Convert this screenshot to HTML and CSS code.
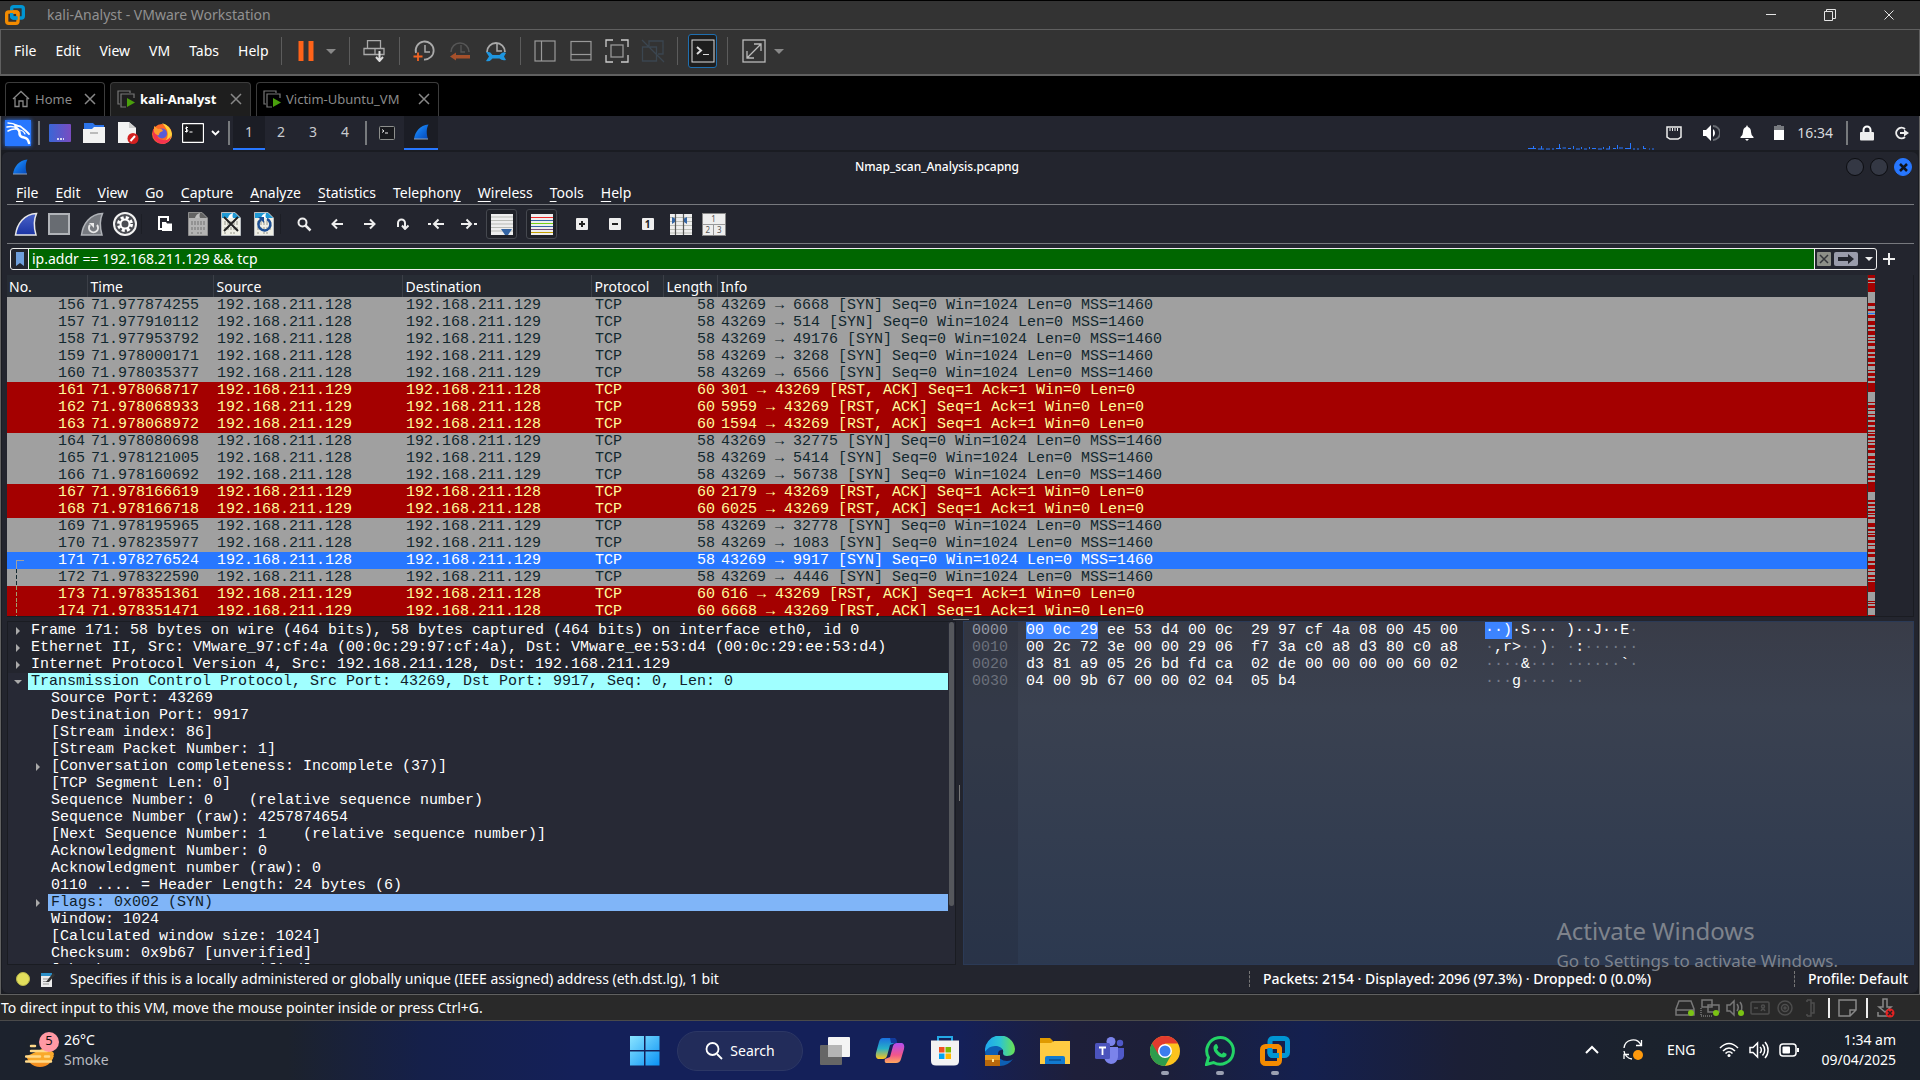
FILE: index.html
```html
<!DOCTYPE html>
<html lang="en">
<head>
<meta charset="utf-8">
<title>kali-Analyst - VMware Workstation</title>
<link rel="stylesheet" href="styles.css">
</head>
<body>
<svg class="defs" aria-hidden="true">
  <defs>
    <linearGradient id="g-fin" x1="0" y1="0" x2="1" y2="1"><stop offset="0" stop-color="#2fa0ff"/><stop offset=".5" stop-color="#0f6ee0"/><stop offset="1" stop-color="#0646b4"/></linearGradient>
    <linearGradient id="g-royal" x1="0" y1="0" x2="0" y2="1"><stop offset="0" stop-color="#4a63c8"/><stop offset="1" stop-color="#1b34a4"/></linearGradient>
    <symbol id="fin" viewBox="0 0 16 16"><path d="M1 15C2 8 7 1 15.500 .5C13 5 13.500 10 15 15Z" fill="url(#g-fin)"/><path d="M1 15H15" stroke="#8fa0b8" stroke-width="1"/></symbol>
    <symbol id="vmlogo" viewBox="0 0 30 30"><rect x="10" y="2.500" width="17.500" height="17" rx="3" fill="none" stroke="#0095d3" stroke-width="5"/><rect x="2.500" y="10.500" width="17" height="17" rx="3" fill="none" stroke="#f38b00" stroke-width="5"/><path d="M10 12V17A3 3 0 0 0 13 19.500H19" fill="none" stroke="#0095d3" stroke-width="5"/><path d="M12 10.500H17A2.500 2.500 0 0 1 19.500 13V16" fill="none" stroke="#f38b00" stroke-width="5"/></symbol>
    <symbol id="x" viewBox="0 0 12 12"><path d="M1 1L11 11M11 1L1 11" fill="none" stroke="currentColor" stroke-width="1.500"/></symbol>
    <symbol id="vmtab" viewBox="0 0 18 18"><path d="M3 14H1V1H13V3" fill="none" stroke="#777" stroke-width="1.200"/><path d="M17 8V4H4V17H9" fill="none" stroke="#777" stroke-width="1.200"/><path d="M10 8V17L18 12.500Z" fill="#4aa00c"/></symbol>
    <symbol id="page" viewBox="0 0 20 24"><path d="M.500 .5H14L19.500 6V23.500H.500Z" fill="#f0f0e6" stroke="#b8bcc0"/><path d="M1 1H14L19 6V6H1Z" fill="#1f9ad6"/><path d="M7 6Q8 2 12 1Q11 4 12 6Z" fill="#fff"/><path d="M4 9V13M7 9V13M10 9V13M13 9V13M16 9V13M4 15V18M7 15V18M10 15V18M13 15V18M16 15V18M4 20V22M10 20V22M13 20V22" stroke="#b5b5aa" stroke-width="1.500"/></symbol>
  </defs>
</svg>

<div class="app">
  <header class="titlebar">
    <svg class="titlebar-logo"><use href="#vmlogo"/></svg>
    <h1>kali-Analyst - VMware Workstation</h1>
    <div class="win-controls">
      <button aria-label="Minimize"><svg width="10" height="12" viewBox="0 0 10 12"><path d="M0 5.500H10" stroke="#e4e4e4"/></svg></button>
      <button aria-label="Restore"><svg width="12" height="12" viewBox="0 0 12 12" fill="none" stroke="#e4e4e4"><path d="M.500 2.500H8.500V11.500H.500Z"/><path d="M2.500 2.500V.500H11.500V9.500H9"/></svg></button>
      <button aria-label="Close"><svg width="10" height="10" viewBox="0 0 10 10"><path d="M.500 .5L9.500 9.500M9.500 .5L.500 9.500" stroke="#e4e4e4"/></svg></button>
    </div>
  </header>

  <div class="vm-toolbar">
    <nav class="vm-menu">
      <button>File</button><button>Edit</button><button>View</button><button>VM</button><button>Tabs</button><button>Help</button>
    </nav>
    <div class="tool-group power">
      <button aria-label="Pause"><svg width="16" height="20" viewBox="0 0 16 20"><path d="M3 0V20M13 0V20" stroke="#ff6319" stroke-width="5"/></svg></button>
      <button class="caret" aria-label="Power options"></button>
    </div>
    <div class="tool-group single">
      <button aria-label="Send Ctrl+Alt+Del"><svg width="22" height="22" viewBox="0 0 22 22" fill="none" stroke="#aaa" stroke-width="1.300"><path d="M4.500 8V.700H17.500V8M1 8.500H12V14.500H1ZM12 8.500H21V14.500H12"/><path d="M16.500 11V20M13 17L16.500 21L20 17" stroke="#ddd" stroke-width="2"/></svg></button>
    </div>
    <div class="tool-group">
      <button aria-label="Take snapshot"><svg width="22" height="22" viewBox="0 0 22 22" fill="none"><path d="M3 13A9 9 0 1 1 11 19.500" stroke="#aaa" stroke-width="1.800"/><path d="M12 5V12H17" stroke="#aaa" stroke-width="1.500"/><path d="M5 12.500V21M.500 16.500H9.500" stroke="#f26322" stroke-width="1.800"/></svg></button>
      <button aria-label="Revert snapshot"><svg width="22" height="22" viewBox="0 0 22 22" fill="none"><path d="M2 12A9 9 0 1 1 20 12" stroke="#565656" stroke-width="1.500"/><path d="M12 5V12H16" stroke="#565656" stroke-width="1.300"/><path d="M1 16.500L7 12.500V15H21V18.500H7V20.500Z" fill="#a5502b"/></svg></button>
      <button aria-label="Manage snapshots"><svg width="22" height="22" viewBox="0 0 22 22" fill="none"><path d="M2 12A9 9 0 1 1 20 12" stroke="#aaa" stroke-width="1.800"/><path d="M12 4V11H17" stroke="#aaa" stroke-width="1.500"/><path d="M1 12Q5 11 7.500 15H14.500Q18 11 21 13L19 16.500L21 20Q17 21 14.500 18.500H7.500Q5 22 1 21L4 16.500Z" fill="#1e96e0"/></svg></button>
    </div>
    <div class="tool-group">
      <button aria-label="Show library"><svg width="22" height="22" viewBox="0 0 22 22" fill="none" stroke="#999" stroke-width="1.200"><rect x="1" y="1" width="20" height="20"/><path d="M7.500 1V21"/></svg></button>
      <button aria-label="Show thumbnail bar"><svg width="22" height="22" viewBox="0 0 22 22" fill="none" stroke="#999" stroke-width="1.200"><rect x="1" y="1.500" width="20" height="18.500"/><path d="M1 14.500H21"/></svg></button>
      <button aria-label="Full screen"><svg width="24" height="24" viewBox="0 0 24 24" fill="none" stroke="#ccc" stroke-width="1.300"><path d="M1 8V1H8M16 1H23V8M23 16V23H16M8 23H1V16"/><rect x="6" y="6" width="12" height="12" stroke="#999"/></svg></button>
      <button aria-label="Unity"><svg width="24" height="24" viewBox="0 0 24 24" fill="none" stroke="#3b4650" stroke-width="1.300"><path d="M8 7V2H22V15H17M1.500 8H15.500V22H1.500ZM1 1L23 23"/></svg></button>
    </div>
    <div class="tool-group console">
      <button class="active" aria-label="Console view"><svg width="24" height="24" viewBox="0 0 24 24" fill="none" stroke="#ddd"><rect x="1" y="1" width="22" height="22"/><path d="M6 8L10 11.500L6 15" stroke-width="2"/><path d="M12 15.500H18"/></svg></button>
    </div>
    <div class="tool-group stretch">
      <button aria-label="Stretch guest"><svg width="24" height="24" viewBox="0 0 24 24" fill="none" stroke="#bbb" stroke-width="1.300"><rect x="1" y="1" width="22" height="22"/><path d="M5 19L19 5M12 5H19V12M5 12V19H12"/></svg></button>
      <button class="caret" aria-label="Stretch options"></button>
    </div>
  </div>

  <nav class="vm-tabs">
    <div class="vm-tab"><button><svg width="18" height="18" viewBox="0 0 18 18" fill="none" stroke="#888" stroke-width="1.300"><path d="M1 9L9 1.500L17 9M3 8V16.500H7V11H11V16.500H15V8"/></svg>Home</button><button aria-label="Close Home"><svg width="12" height="12"><use href="#x"/></svg></button></div>
    <div class="vm-tab current"><button><svg width="18" height="18"><use href="#vmtab"/></svg>kali-Analyst</button><button aria-label="Close kali-Analyst"><svg width="12" height="12"><use href="#x"/></svg></button></div>
    <div class="vm-tab wide"><button><svg width="18" height="18"><use href="#vmtab"/></svg>Victim-Ubuntu_VM</button><button aria-label="Close Victim-Ubuntu_VM"><svg width="12" height="12"><use href="#x"/></svg></button></div>
  </nav>

  <main class="guest">
    <div class="panel">
      <div class="launchers">
        <button class="kali" aria-label="Applications"><svg width="26" height="26" viewBox="0 0 26 26" fill="none" stroke="#fff" stroke-linecap="round"><path d="M3 3Q8 3 12 5.500M2 7Q7 5.500 12 8M3 11Q7 8.500 11 9" stroke-width="1.500"/><path d="M10 6Q15 5 18 8.500L21 11L24 14" stroke-width="1.800"/><path d="M11 8Q15 10 14.500 14Q15 17 19 17.500Q23 18 24 23" stroke-width="2.500"/><path d="M15 10Q19 11 20 14" stroke-width="1.200"/></svg></button>
        <span class="bar"></span>
        <button aria-label="Desktop"><svg width="22" height="18" viewBox="0 0 22 18"><defs><linearGradient id="g-desk"><stop stop-color="#3a66d6"/><stop offset="1" stop-color="#7a4cc0"/></linearGradient></defs><rect width="22" height="18" rx="1" fill="url(#g-desk)"/><path d="M8 15H10M11 15H13M14 15H15" stroke="#fff" stroke-width="1.500"/></svg></button>
        <button aria-label="Files"><svg width="24" height="22" viewBox="0 0 24 22"><path d="M2 1H11L13 3H22V8H2Z" fill="#2c74ea"/><path d="M1 7H10L12 5H23V21H1Z" fill="#f2f2f2"/><path d="M8 11H16" stroke="#bbb" stroke-width="2"/></svg></button>
        <button aria-label="Text editor"><svg width="22" height="24" viewBox="0 0 22 24"><path d="M1 1H12L19 7V22H1Z" fill="#f3f3f3"/><path d="M12 1V7H19Z" fill="#cfcfcf"/><circle cx="16" cy="17.500" r="5.500" fill="#d32020"/><path d="M13.500 20L18 15" stroke="#fff" stroke-width="2"/></svg></button>
        <button aria-label="Firefox"><svg width="24" height="24" viewBox="0 0 24 24"><circle cx="12" cy="13" r="10" fill="#ff6a26"/><path d="M12 2Q21 5 22 13A10 10 0 0 1 12 23Q20 18 17 9Q15 5 12 2Z" fill="#ffd23a"/><path d="M3 13A10 10 0 0 0 12 23Q20 23 21 15Q18 20 13 19Q6 18 7 11L3 8Z" fill="#f5334f"/><circle cx="12" cy="12.500" r="5" fill="#5a5cd8"/><path d="M4 5L8 8Q12 7 13 10Q9 11 9 14Q6 15 4 11Z" fill="#ff9a2e"/></svg></button>
        <button class="term" aria-label="Terminal"><svg width="22" height="20" viewBox="0 0 22 20" fill="none" stroke="#fff"><rect x=".5" y=".5" width="21" height="19" rx="1" fill="#18191d" stroke-width="1.300"/><path d="M6 4.500H4Q3 6 5 6.500Q6.500 7 5.500 8.500H3M4.500 3.500V9.500M7.500 9H10.500"/></svg></button>
        <button class="chev" aria-label="More terminals"><svg width="9" height="6" viewBox="0 0 9 6"><path d="M1 1L4.500 4.500L8 1" fill="none" stroke="#fff" stroke-width="1.800"/></svg></button>
        <span class="bar"></span>
      </div>
      <div class="workspaces"><button class="on">1</button><button>2</button><button>3</button><button>4</button></div>
      <div class="tasks">
        <span class="bar"></span>
        <button aria-label="Terminal window"><svg width="16" height="14" viewBox="0 0 16 14"><rect x=".5" y=".5" width="15" height="13" rx="1" fill="#18191d" stroke="#8d8f8d"/><path d="M3 3.500L5 5L3 6.500M6 7H9" fill="none" stroke="#eee"/></svg></button>
        <button class="on" aria-label="Wireshark window"><svg width="16" height="16"><use href="#fin"/></svg></button>
      </div>
      <svg class="cpu" width="126" height="7" viewBox="0 0 126 7" fill="none" stroke="#2777ff"><path d="M0 5.500H8M5.500 3V6M10 6H16M13.500 3V6M18 6H22M24 6H26M28 5.500H33M31.500 1V6M34.500 5H38M40 5.500H43M45.500 3V6M48 6H52M53.500 4V6M56 6H59M61.500 4V6M64 5.500H68M70 6H74M75.500 4V6M78 6H82M81.500 3V6M85 5.500H88M89.500 2V6M91 5H95M97 5.500H103M102.500 0V6M105 6H107M109 6H111M115.500 3V6M116 5.500H118M121 6H122M124 6H126"/></svg>
      <div class="tray">
        <svg width="16" height="14" viewBox="0 0 16 14" fill="none" stroke="#eee" stroke-width="1.500"><path d="M1 1H15V11L12 13H4L1 11Z"/><path d="M4 2V5M6.500 2V5M9 2V5M11.500 2V5" stroke-width="1"/></svg>
        <svg width="18" height="18" viewBox="0 0 18 18"><path d="M1 6H4L9 1V17L4 12H1Z" fill="#fff"/><path d="M11 5A5 5 0 0 1 11 13Z" fill="#fff"/><path d="M11 2A7 7 0 0 1 11 16" fill="none" stroke="#666a70" stroke-width="1.800"/></svg>
        <svg width="14" height="16" viewBox="0 0 14 16"><path d="M7 0L8 2Q11 3 11 7Q11 10 13.500 12V13H.500V12Q3 10 3 7Q3 3 6 2ZM5 14H9L7 16Z" fill="#fff"/></svg>
        <svg width="10" height="16" viewBox="0 0 10 16"><path d="M0 1H3V0H7V1H10V6H0Z" fill="#777a7f"/><path d="M0 5H10V15H0Z" fill="#fff"/></svg>
        <time class="clock">16:34</time>
        <span class="bar"></span>
        <svg width="14" height="16" viewBox="0 0 14 16"><path d="M3.500 8V5A3.500 3.500 0 0 1 10.500 5V8" fill="none" stroke="#fff" stroke-width="2"/><rect x="0" y="7" width="14" height="8.500" rx="1" fill="#eee"/></svg>
        <svg width="16" height="14" viewBox="0 0 16 14" fill="none" stroke="#eee" stroke-width="2"><path d="M11 3A5.300 5.300 0 1 0 11 11"/><path d="M6 7H11"/><path d="M10 3.500L15 7L10 10.500Z" fill="#eee" stroke="none"/></svg>
      </div>
    </div>

    <section class="shark">
      <header class="shark-title">
        <svg width="16" height="16"><use href="#fin"/></svg>
        <h2>Nmap_scan_Analysis.pcapng</h2>
        <button aria-label="Minimize"></button><button aria-label="Maximize"></button><button class="close" aria-label="Close"><svg width="9" height="9" viewBox="0 0 9 9"><path d="M1 1L8 8M8 1L1 8" stroke="#10131c" stroke-width="2.500"/></svg></button>
      </header>
      <nav class="shark-menu">
        <button><u>F</u>ile</button><button><u>E</u>dit</button><button><u>V</u>iew</button><button><u>G</u>o</button><button><u>C</u>apture</button><button><u>A</u>nalyze</button><button><u>S</u>tatistics</button><button>Telephon<u>y</u></button><button><u>W</u>ireless</button><button><u>T</u>ools</button><button><u>H</u>elp</button>
      </nav>
      <div class="shark-tools">
        <button aria-label="Start capture"><svg width="24" height="24" viewBox="0 0 24 24"><path d="M1.500 23C3 12 10 2 22.500 1.500C19 9 20 16 22 23Z" fill="url(#g-royal)" stroke="#e8e8e8" stroke-width="1.500"/></svg></button>
        <button aria-label="Stop capture"><svg width="22" height="22" viewBox="0 0 22 22"><rect x="1" y="1" width="20" height="20" fill="#686c72" stroke="#b0b3b8" stroke-width="2"/></svg></button>
        <button aria-label="Restart capture"><svg width="24" height="24" viewBox="0 0 24 24"><path d="M1.500 23C3 12 10 2 22.500 1.500C19 9 20 16 22 23Z" fill="#777a80" stroke="#b0b3b8" stroke-width="1.500"/><path d="M10 13A4.500 4.500 0 1 0 17 13" fill="none" stroke="#e8e8e8" stroke-width="2"/><path d="M9 11H14V16Z" fill="#e8e8e8"/></svg></button>
        <button aria-label="Capture options"><svg width="24" height="24" viewBox="0 0 24 24" fill="none"><circle cx="12" cy="12" r="11" fill="#4a4c52" stroke="#f2f2f2" stroke-width="2"/><circle cx="12" cy="12" r="6.500" stroke="#fff" stroke-width="3" stroke-dasharray="3 2.100"/><circle cx="12" cy="12" r="4.500" stroke="#fff" stroke-width="2"/></svg></button>
        <i></i>
        <button aria-label="Open file"><svg width="16" height="16" viewBox="0 0 16 16"><path d="M6 13H2V1H11V5" fill="none" stroke="#fff" stroke-width="2"/><path d="M5 6H9L10 7.500H15V15H5Z" fill="#fff"/></svg></button>
        <button aria-label="Save file"><svg class="dim" width="20" height="24"><use href="#page"/></svg></button>
        <button aria-label="Close file"><svg width="20" height="24" viewBox="0 0 20 24"><use href="#page" width="20" height="24"/><path d="M3 5L17 19M17 5L3 19" stroke="#222" stroke-width="2"/></svg></button>
        <button aria-label="Reload file"><svg width="20" height="24" viewBox="0 0 20 24"><use href="#page" width="20" height="24"/><path d="M13 7A6 6 0 1 1 7 7.500" fill="none" stroke="#1c4f94" stroke-width="2.500"/><path d="M4 5H10V11Z" fill="#1c4f94"/></svg></button>
        <i></i>
        <button aria-label="Find packet"><svg width="16" height="16" viewBox="0 0 16 16" fill="none" stroke="#eee"><circle cx="6.500" cy="6.500" r="4" stroke-width="2"/><path d="M9.500 9.500L14.500 14.500" stroke-width="2.500"/></svg></button>
        <button aria-label="Previous packet"><svg width="12" height="12" viewBox="0 0 12 12" fill="none" stroke="#eee" stroke-width="2"><path d="M12 6H1.500M6 1.500L1.500 6L6 10.500"/></svg></button>
        <button aria-label="Next packet"><svg width="12" height="12" viewBox="0 0 12 12" fill="none" stroke="#eee" stroke-width="2"><path d="M0 6H10.500M6 1.500L10.500 6L6 10.500"/></svg></button>
        <button aria-label="Go to packet"><svg width="12" height="12" viewBox="0 0 12 12" fill="none" stroke="#eee" stroke-width="2"><path d="M1 9V5A3.500 3.500 0 0 1 8 5V10M5 7.500L8 11L11.500 7.500"/></svg></button>
        <button aria-label="First packet"><svg width="16" height="12" viewBox="0 0 16 12" fill="none" stroke="#eee" stroke-width="2"><path d="M16 6H6M10.500 1.500L6 6L10.500 10.500M0 6H3"/></svg></button>
        <button aria-label="Last packet"><svg width="16" height="12" viewBox="0 0 16 12" fill="none" stroke="#eee" stroke-width="2"><path d="M0 6H10M5.500 1.500L10 6L5.500 10.500M13 6H16"/></svg></button>
        <button class="checked" aria-label="Auto scroll"><svg width="22" height="21" viewBox="0 0 22 21"><path d="M0 0H22V21H0Z" fill="#eee"/><path d="M0 3H22M0 6.500H22M0 10H22M0 13.500H22M0 17H22" stroke="#b9bbb6"/><path d="M10 15H21L17 21H14Z" fill="#3465a4"/></svg></button>
        <i></i>
        <button class="checked" aria-label="Colorize"><svg width="22" height="21" viewBox="0 0 22 21"><path d="M0 0H22V21H0Z" fill="#eee"/><path d="M0 3.500H22" stroke="#ef2929"/><path d="M0 6.500H22M0 12.500H22" stroke="#3465a4"/><path d="M0 9.500H22" stroke="#73d216"/><path d="M0 15.500H22" stroke="#75507b"/><path d="M0 18.500H22" stroke="#c4a000"/></svg></button>
        <i></i>
        <button aria-label="Zoom in"><svg width="12" height="12" viewBox="0 0 12 12"><rect width="12" height="12" rx="1" fill="#eee"/><path d="M3 6H9M6 3V9" stroke="#222" stroke-width="2"/></svg></button>
        <button aria-label="Zoom out"><svg width="12" height="12" viewBox="0 0 12 12"><rect width="12" height="12" rx="1" fill="#eee"/><path d="M3 6H9" stroke="#222" stroke-width="2"/></svg></button>
        <button aria-label="Normal size"><span class="one">1</span></button>
        <button aria-label="Resize columns"><svg width="22" height="21" viewBox="0 0 22 21"><path d="M0 0H22V21H0Z" fill="#eee"/><path d="M0 3.500H22M0 7.500H22M0 11.500H22M0 15.500H22M0 19H22" stroke="#babdb6"/><path d="M5.500 0V21M13.500 0V21" stroke="#555" stroke-width="1.200"/><path d="M2 3L5 4.500V8L2 10ZM17 3L14 4.500V8L17 10Z" fill="#3465a4"/></svg></button>
        <button aria-label="Layout"><span class="layout"><b>1</b><b>2</b><b>3</b></span></button>
      </div>

      <div class="filter">
        <div class="filter-box">
          <button class="bookmark" aria-label="Bookmark filter"><svg width="8" height="14" viewBox="0 0 8 14"><path d="M0 0H8V14L4 11L0 14Z" fill="#6f9fdc"/></svg></button>
          <input type="text" aria-label="Display filter" value="ip.addr == 192.168.211.129 &amp;&amp; tcp">
          <button class="clear" aria-label="Clear filter"><svg width="10" height="10" viewBox="0 0 10 10"><path d="M1 1L9 9M9 1L1 9" stroke="#33353a" stroke-width="1.500"/></svg></button>
          <button class="apply" aria-label="Apply filter"><svg width="16" height="10" viewBox="0 0 16 10"><path d="M0 3H10V0L16 5L10 10V7H0Z" fill="#23252e"/></svg></button>
          <button class="caret white" aria-label="Recent filters"></button>
        </div>
        <button class="add" aria-label="Add filter button"><svg width="12" height="12" viewBox="0 0 12 12"><path d="M6 0V12M0 6H12" stroke="#eee" stroke-width="2"/></svg></button>
      </div>

      <div class="packets">
        <div class="packet-scroll">
          <table>
            <colgroup><col class="c-no"><col class="c-time"><col class="c-addr"><col class="c-addr"><col class="c-proto"><col class="c-len"><col></colgroup>
            <thead><tr><th>No.</th><th>Time</th><th>Source</th><th>Destination</th><th>Protocol</th><th>Length</th><th>Info</th></tr></thead>
            <tbody>
              <tr><td>156</td><td>71.977874255</td><td>192.168.211.128</td><td>192.168.211.129</td><td>TCP</td><td>58</td><td>43269 → 6668 [SYN] Seq=0 Win=1024 Len=0 MSS=1460</td></tr>
              <tr><td>157</td><td>71.977910112</td><td>192.168.211.128</td><td>192.168.211.129</td><td>TCP</td><td>58</td><td>43269 → 514 [SYN] Seq=0 Win=1024 Len=0 MSS=1460</td></tr>
              <tr><td>158</td><td>71.977953792</td><td>192.168.211.128</td><td>192.168.211.129</td><td>TCP</td><td>58</td><td>43269 → 49176 [SYN] Seq=0 Win=1024 Len=0 MSS=1460</td></tr>
              <tr><td>159</td><td>71.978000171</td><td>192.168.211.128</td><td>192.168.211.129</td><td>TCP</td><td>58</td><td>43269 → 3268 [SYN] Seq=0 Win=1024 Len=0 MSS=1460</td></tr>
              <tr><td>160</td><td>71.978035377</td><td>192.168.211.128</td><td>192.168.211.129</td><td>TCP</td><td>58</td><td>43269 → 6566 [SYN] Seq=0 Win=1024 Len=0 MSS=1460</td></tr>
              <tr class="rst"><td>161</td><td>71.978068717</td><td>192.168.211.129</td><td>192.168.211.128</td><td>TCP</td><td>60</td><td>301 → 43269 [RST, ACK] Seq=1 Ack=1 Win=0 Len=0</td></tr>
              <tr class="rst"><td>162</td><td>71.978068933</td><td>192.168.211.129</td><td>192.168.211.128</td><td>TCP</td><td>60</td><td>5959 → 43269 [RST, ACK] Seq=1 Ack=1 Win=0 Len=0</td></tr>
              <tr class="rst"><td>163</td><td>71.978068972</td><td>192.168.211.129</td><td>192.168.211.128</td><td>TCP</td><td>60</td><td>1594 → 43269 [RST, ACK] Seq=1 Ack=1 Win=0 Len=0</td></tr>
              <tr><td>164</td><td>71.978080698</td><td>192.168.211.128</td><td>192.168.211.129</td><td>TCP</td><td>58</td><td>43269 → 32775 [SYN] Seq=0 Win=1024 Len=0 MSS=1460</td></tr>
              <tr><td>165</td><td>71.978121005</td><td>192.168.211.128</td><td>192.168.211.129</td><td>TCP</td><td>58</td><td>43269 → 5414 [SYN] Seq=0 Win=1024 Len=0 MSS=1460</td></tr>
              <tr><td>166</td><td>71.978160692</td><td>192.168.211.128</td><td>192.168.211.129</td><td>TCP</td><td>58</td><td>43269 → 56738 [SYN] Seq=0 Win=1024 Len=0 MSS=1460</td></tr>
              <tr class="rst"><td>167</td><td>71.978166619</td><td>192.168.211.129</td><td>192.168.211.128</td><td>TCP</td><td>60</td><td>2179 → 43269 [RST, ACK] Seq=1 Ack=1 Win=0 Len=0</td></tr>
              <tr class="rst"><td>168</td><td>71.978166718</td><td>192.168.211.129</td><td>192.168.211.128</td><td>TCP</td><td>60</td><td>6025 → 43269 [RST, ACK] Seq=1 Ack=1 Win=0 Len=0</td></tr>
              <tr><td>169</td><td>71.978195965</td><td>192.168.211.128</td><td>192.168.211.129</td><td>TCP</td><td>58</td><td>43269 → 32778 [SYN] Seq=0 Win=1024 Len=0 MSS=1460</td></tr>
              <tr><td>170</td><td>71.978235977</td><td>192.168.211.128</td><td>192.168.211.129</td><td>TCP</td><td>58</td><td>43269 → 1083 [SYN] Seq=0 Win=1024 Len=0 MSS=1460</td></tr>
              <tr class="selected"><td class="first">171</td><td>71.978276524</td><td>192.168.211.128</td><td>192.168.211.129</td><td>TCP</td><td>58</td><td>43269 → 9917 [SYN] Seq=0 Win=1024 Len=0 MSS=1460</td></tr>
              <tr><td class="related">172</td><td>71.978322590</td><td>192.168.211.128</td><td>192.168.211.129</td><td>TCP</td><td>58</td><td>43269 → 4446 [SYN] Seq=0 Win=1024 Len=0 MSS=1460</td></tr>
              <tr class="rst"><td class="related">173</td><td>71.978351361</td><td>192.168.211.129</td><td>192.168.211.128</td><td>TCP</td><td>60</td><td>616 → 43269 [RST, ACK] Seq=1 Ack=1 Win=0 Len=0</td></tr>
              <tr class="rst"><td class="related">174</td><td>71.978351471</td><td>192.168.211.129</td><td>192.168.211.128</td><td>TCP</td><td>60</td><td>6668 → 43269 [RST, ACK] Seq=1 Ack=1 Win=0 Len=0</td></tr>
            </tbody>
          </table>
        </div>
        <svg class="minimap" viewBox="0 15 21 1023" preserveAspectRatio="none"><path d="M0 15H21V1038H0Z" fill="#a40000"/><path fill="#a0a0a0" d="M0 24h21v6H0zM0 36h21v3H0zM0 66h21v33H0zM0 108h21v9H0zM0 123h21v12H0zM0 144h21v9H0zM0 165h21v6H0zM0 177h21v6H0zM0 195h21v6H0zM0 204h21v6H0zM0 213h21v6H0zM0 228h21v9H0zM0 246h21v6H0zM0 258h21v6H0zM0 276h21v6H0zM0 288h21v12H0zM0 303h21v6H0zM0 318h21v6H0zM0 333h21v6H0zM0 366h21v30H0zM0 399h21v6H0zM0 414h21v6H0zM0 423h21v9H0zM0 435h21v6H0zM0 450h21v6H0zM0 465h21v6H0zM0 480h21v6H0zM0 489h21v3H0zM0 498h21v6H0zM0 510h21v6H0zM0 519h21v6H0zM0 534h21v6H0zM0 549h21v9H0zM0 567h21v6H0zM0 579h21v6H0zM0 588h21v6H0zM0 600h21v9H0zM0 618h21v6H0zM0 630h21v6H0zM0 666h21v24H0zM0 696h21v6H0zM0 708h21v6H0zM0 717h21v6H0zM0 729h21v3H0zM0 735h21v6H0zM0 747h21v12H0zM0 771h21v6H0zM0 783h21v6H0zM0 792h21v3H0zM0 801h21v9H0zM0 819h21v6H0zM0 828h21v9H0zM0 846h21v6H0zM0 861h21v12H0zM0 879h21v6H0zM0 897h21v6H0zM0 906h21v9H0zM0 921h21v6H0zM0 933h21v3H0zM0 966h21v27H0zM0 996h21v3H0zM0 1002h21v6H0zM0 1014h21v21H0z"/><path d="M0 129h21v3H0z" fill="#2777ff"/></svg>
      </div>

      <div class="splitter"></div>

      <div class="lower">
        <div class="details">
          <ul class="tree">
            <li class="top closed"><span>Frame 171: 58 bytes on wire (464 bits), 58 bytes captured (464 bits) on interface eth0, id 0</span></li>
            <li class="top closed"><span>Ethernet II, Src: VMware_97:cf:4a (00:0c:29:97:cf:4a), Dst: VMware_ee:53:d4 (00:0c:29:ee:53:d4)</span></li>
            <li class="top closed"><span>Internet Protocol Version 4, Src: 192.168.211.128, Dst: 192.168.211.129</span></li>
            <li class="top open"><span class="related-proto">Transmission Control Protocol, Src Port: 43269, Dst Port: 9917, Seq: 0, Len: 0</span></li>
            <li><span>Source Port: 43269</span></li>
            <li><span>Destination Port: 9917</span></li>
            <li><span>[Stream index: 86]</span></li>
            <li><span>[Stream Packet Number: 1]</span></li>
            <li class="closed"><span>[Conversation completeness: Incomplete (37)]</span></li>
            <li><span>[TCP Segment Len: 0]</span></li>
            <li><span>Sequence Number: 0    (relative sequence number)</span></li>
            <li><span>Sequence Number (raw): 4257874654</span></li>
            <li><span>[Next Sequence Number: 1    (relative sequence number)]</span></li>
            <li><span>Acknowledgment Number: 0</span></li>
            <li><span>Acknowledgment number (raw): 0</span></li>
            <li><span>0110 .... = Header Length: 24 bytes (6)</span></li>
            <li class="closed"><span class="flags">Flags: 0x002 (SYN)</span></li>
            <li><span>Window: 1024</span></li>
            <li><span>[Calculated window size: 1024]</span></li>
            <li><span>Checksum: 0x9b67 [unverified]</span></li>
            <li><span>[Checksum Status: Unverified]</span></li>
          </ul>
          <div class="scrollbar"></div>
        </div>
        <div class="grip"></div>
        <div class="bytes">
<pre class="offsets"><em>0000</em>
0010
0020
0030</pre>
<pre class="hex"><mark>00 0c 29</mark> ee 53 d4 00 0c  29 97 cf 4a 08 00 45 00   <mark>··)</mark>·S··· )··J··E<s>·</s>
00 2c 72 3e 00 00 29 06  f7 3a c0 a8 d3 80 c0 a8   <s>·</s>,r&gt;<s>··</s>)<s>·</s> <s>·</s>:<s>······</s>
d3 81 a9 05 26 bd fd ca  02 de 00 00 00 00 60 02   <s>····</s>&amp;<s>···</s> <s>······</s>`<s>·</s>
04 00 9b 67 00 00 02 04  05 b4                     <s>···</s>g<s>····</s> <s>··</s></pre>
        </div>
      </div>

      <footer class="shark-status">
        <svg width="14" height="14" viewBox="0 0 14 14"><circle cx="7" cy="7" r="6.500" fill="#e2df5c" stroke="#b9b64a"/></svg>
        <svg width="14" height="15" viewBox="0 0 14 15"><path d="M0 1H11V15H0Z" fill="#ececec"/><path d="M0 1H11V4H0Z" fill="#2b8fc8"/><path d="M2 7H8M2 9.500H8M2 12H8" stroke="#999"/><path d="M5 10L12 1L14 3L8 10Z" fill="#333"/></svg>
        <span class="hint">Specifies if this is a locally administered or globally unique (IEEE assigned) address (eth.dst.lg), 1 bit</span>
        <span class="count">Packets: 2154 · Displayed: 2096 (97.3%) · Dropped: 0 (0.0%)</span>
        <span class="profile">Profile: Default</span>
      </footer>
    </section>
  </main>

  <footer class="vm-status">
    <span>To direct input to this VM, move the mouse pointer inside or press Ctrl+G.</span>
    <div class="devices">
      <svg width="20" height="18" viewBox="0 0 20 18" fill="none" stroke="#777" stroke-width="1.500"><path d="M1 10L4 2H16L19 10V16H1ZM1 11H19"/><circle cx="16" cy="14" r="3" fill="#7bc314" stroke="none"/></svg>
      <svg width="20" height="18" viewBox="0 0 20 18" fill="none" stroke="#777" stroke-width="1.500"><path d="M2 1H12V8H2ZM8 6H19V13H8Z"/><path d="M1 9V17H12" stroke-dasharray="1 1"/><circle cx="16" cy="14" r="3" fill="#7bc314" stroke="none"/></svg>
      <svg width="20" height="18" viewBox="0 0 20 18" fill="none" stroke="#777" stroke-width="1.500"><path d="M2 6H5L9 2V16L5 12H2ZM12 5A6 6 0 0 1 12 12M15 3A9 9 0 0 1 16 12"/><circle cx="16" cy="14" r="3" fill="#7bc314" stroke="none"/></svg>
      <svg width="20" height="18" viewBox="0 0 20 18" fill="none" stroke="#4d4d4d" stroke-width="1.500"><rect x="1" y="3" width="18" height="12" rx="1"/><path d="M4 9H8M11 12Q13 8 15 12"/><circle cx="13" cy="7.500" r="1.500"/></svg>
      <svg width="20" height="18" viewBox="0 0 20 18" fill="none" stroke="#4d4d4d" stroke-width="1.500"><circle cx="10" cy="9" r="7"/><circle cx="10" cy="9" r="3.500"/><circle cx="10" cy="9" r="1"/></svg>
      <svg width="20" height="18" viewBox="0 0 20 18" fill="none" stroke="#4d4d4d" stroke-width="1.500"><path d="M7 1H11V17H7M11 4H14V14H11M7 1V3M7 15V17"/></svg>
      <b></b>
      <svg width="20" height="18" viewBox="0 0 20 18" fill="none" stroke="#888" stroke-width="1.500"><path d="M1 1H18V11L12 17H1ZM12 17V11H18"/></svg>
      <b></b>
      <svg width="20" height="20" viewBox="0 0 20 20" fill="none" stroke="#888" stroke-width="1.500"><path d="M7 1H11V9H15L9 14L3 9H7ZM2 14V18H12"/><circle cx="14" cy="15" r="4.500" fill="#e32222" stroke="none"/><path d="M12 13L16 17M16 13L12 17" stroke="#222"/></svg>
    </div>
  </footer>

  <footer class="taskbar">
    <button class="weather">
      <svg width="34" height="36" viewBox="0 0 34 36"><defs><linearGradient id="g-sun" x1="0" y1="0" x2="0" y2="1"><stop stop-color="#ffc83a"/><stop offset="1" stop-color="#f28a1e"/></linearGradient></defs><circle cx="15" cy="21" r="14" fill="url(#g-sun)"/><path d="M0 4H30V24H0Z" fill="#1c222c"/><path d="M17 17Q29 18 29 22Q28 27 26 29H6L2 24Z" fill="#f9a92b"/><path d="M6 14H10M6 19H22M1 24.500H15M20 24.500H24M1 29.500H26" stroke="#ffd988" stroke-width="2.500" stroke-linecap="round"/><circle cx="24" cy="10" r="10" fill="#ff99a4"/></svg>
      <span class="badge">5</span>
      <span>26°C<small>Smoke</small></span>
    </button>
    <div class="apps">
      <button aria-label="Start"><svg width="30" height="30" viewBox="0 0 30 30"><defs><linearGradient id="g-win" x1="0" y1="0" x2="1" y2="1"><stop stop-color="#8ae4ff"/><stop offset="1" stop-color="#0a92f5"/></linearGradient></defs><path d="M0 0H14V14H0ZM15.500 0H29.500V14H15.500ZM0 15.500H14V29.500H0ZM15.500 15.500H29.500V29.500H15.500Z" fill="url(#g-win)"/></svg></button>
      <button class="search"><svg width="18" height="18" viewBox="0 0 18 18" fill="none" stroke="#fff" stroke-width="1.800"><circle cx="7.500" cy="7" r="6"/><path d="M12 12L17 17"/></svg>Search</button>
      <button aria-label="Task view"><svg width="30" height="28" viewBox="0 0 30 28"><rect x="0" y="8" width="22" height="20" rx="1" fill="#666"/><rect x="8" y="0" width="22" height="20" rx="1" fill="#f4f4f4"/><path d="M8 8H22V20H8Z" fill="#b5b5b5"/></svg></button>
      <button aria-label="Copilot"><svg width="30" height="28" viewBox="0 0 30 28"><defs><linearGradient id="g-c1" x1="0" y1="0" x2="0" y2="1"><stop stop-color="#1a6fe0"/><stop offset=".5" stop-color="#27b0c8"/><stop offset="1" stop-color="#ffc41a"/></linearGradient><linearGradient id="g-c2" x1="0" y1="0" x2="0" y2="1"><stop stop-color="#b34df0"/><stop offset=".6" stop-color="#f2568a"/><stop offset="1" stop-color="#ffa95e"/></linearGradient></defs><path d="M8 1H19Q21 1 20 6L15 8L12 19Q11 22 8 22H3Q0 21 1 16L4 5Q5 1 8 1Z" fill="url(#g-c1)"/><path d="M22 6H27Q30 7 29 12L26 22Q25 26 21 26H11Q9 25 10 22L15 20L18 9Q19 6 22 6Z" fill="url(#g-c2)"/><path d="M15 1H19Q22 1 22 6H16Z" fill="#123a9c"/></svg></button>
      <button aria-label="Microsoft Store"><svg width="30" height="30" viewBox="0 0 30 30"><path d="M8 5V1H22V5" fill="none" stroke="#24a8e6" stroke-width="2"/><path d="M1 4.500H29V25Q29 29.500 24 29.500H6Q1 29.500 1 25Z" fill="#f3f3f3"/><path d="M9 11H14.500V16.500H9Z" fill="#f25022"/><path d="M15.500 11H21V16.500H15.500Z" fill="#7fba00"/><path d="M9 17.500H14.500V23H9Z" fill="#00a4ef"/><path d="M15.500 17.500H21V23H15.500Z" fill="#ffb900"/></svg></button>
      <button aria-label="Edge"><svg width="30" height="30" viewBox="0 0 30 30"><defs><linearGradient id="g-edge"><stop stop-color="#1ea5ee"/><stop offset=".5" stop-color="#2cc4d4"/><stop offset="1" stop-color="#6be350"/></linearGradient></defs><path d="M0 16A15 15 0 0 1 30 13Q30 20 22 20Q18 20 18 17Q19 13 15 12Q9 10 0 16Z" fill="url(#g-edge)"/><path d="M0 16Q4 9 12 10Q17 11 17 14Q13 14 13 18Q14 25 22 25Q26 25 28 23Q23 30 15 30A15 15 0 0 1 0 16Z" fill="#0d5fb4"/><path d="M0 19H15V30H0Z" fill="#b8680a"/><path d="M0 19H15V24H0Z" fill="#e69a1e"/><path d="M7 23H9V26H7Z" fill="#ffe08a"/></svg></button>
      <button aria-label="File Explorer"><svg width="30" height="28" viewBox="0 0 30 28"><path d="M0 1H10L13 4V9H0Z" fill="#e09a00"/><path d="M0 6H11L14 4H30V27H0Z" fill="#ffcb42"/><path d="M5 27V21Q5 19 7 19H23Q25 19 25 21V27Z" fill="#127ad0"/><path d="M9 23H21" stroke="#0a4f90" stroke-width="1.500"/></svg></button>
      <button aria-label="Teams"><svg width="30" height="28" viewBox="0 0 30 28"><circle cx="16" cy="4.500" r="4.500" fill="#7b83eb"/><circle cx="25" cy="6" r="3.200" fill="#5059c9"/><path d="M18 11H29V19Q28 23 24 23H18Z" fill="#5059c9"/><path d="M9 10H23V20Q22 27 16 27Q10 26 9 20Z" fill="#7b83eb"/><rect x="0" y="6" width="15" height="16" rx="1.500" fill="#4b53bc"/><path d="M4 10.500H11M7.500 10.500V18" stroke="#fff" stroke-width="1.800"/></svg></button>
      <button class="running" aria-label="Chrome"><svg width="30" height="30" viewBox="0 0 30 30"><circle cx="15" cy="15" r="15" fill="#fcc31e"/><path d="M15 15L2 7.500A15 15 0 0 0 15 30L21.500 18.500Z" fill="#2e9c4c"/><path d="M2 7.500A15 15 0 0 1 28 7.500H15L8.500 18.500Z" fill="#e33b2e"/><circle cx="15" cy="15" r="7" fill="#fff"/><circle cx="15" cy="15" r="5.500" fill="#3b7ded"/></svg></button>
      <button class="running" aria-label="WhatsApp"><svg width="30" height="30" viewBox="0 0 30 30"><path d="M1.500 28.500L3.500 21.500A13.300 13.300 0 1 1 8.500 26.500Z" fill="none" stroke="#23d366" stroke-width="3"/><path d="M10 8.500Q11.500 7.500 12.300 9L13.300 11.500L12 13.500Q13.500 16.500 16.800 18L18.500 16.200L21.500 17.800Q22 21 18.500 21.500Q14 21.500 10.500 17Q6.500 12 10 8.500Z" fill="#23d366"/></svg></button>
      <button class="running" aria-label="VMware Workstation"><svg width="30" height="30"><use href="#vmlogo"/></svg></button>
    </div>
    <div class="systray">
      <button aria-label="Hidden icons"><svg width="14" height="9" viewBox="0 0 14 9"><path d="M1 8L7 2L13 8" fill="none" stroke="#fff" stroke-width="2"/></svg></button>
      <button class="sync" aria-label="Updates"><svg width="22" height="22" viewBox="0 0 22 22" fill="none" stroke="#fff" stroke-width="1.300"><path d="M2 9A9 9 0 0 1 19 6M19.500 1V6.500H14M2 12A9 9 0 0 0 10 20M2 20V15.500H7"/><circle cx="16" cy="16" r="5" fill="#ff9a0d" stroke="none"/></svg></button>
      <button>ENG</button>
      <button class="indicators" aria-label="Network, volume and battery">
        <svg width="20" height="16" viewBox="0 0 20 16" fill="none" stroke="#fff" stroke-width="1.600"><path d="M1 6Q10 -3 19 6M4 9Q10 3 16 9M6.500 11.500Q10 8 13.500 11.500"/><circle cx="10" cy="13.500" r="1.500" fill="#fff" stroke="none"/></svg>
        <svg width="20" height="18" viewBox="0 0 20 18" fill="none" stroke="#fff" stroke-width="1.500"><path d="M1 6.500H4L8.500 2V16L4 11.500H1ZM11 6A4 4 0 0 1 11 12M13.500 3.500A8 8 0 0 1 13.500 14.500M16 1A12 12 0 0 1 16 17"/></svg>
        <svg width="20" height="14" viewBox="0 0 20 14" fill="none" stroke="#fff" stroke-width="1.500"><rect x="1" y="1" width="16" height="12" rx="3"/><rect x="3.500" y="3.500" width="7.500" height="7" rx="1" fill="#fff" stroke="none"/><path d="M19 5V9" stroke-width="2"/></svg>
      </button>
      <button class="date"><span>1:34 am</span><span>09/04/2025</span></button>
    </div>
  </footer>
</div>

<aside class="activate"><p>Activate Windows</p><p class="sub">Go to Settings to activate Windows.</p></aside>
</body>
</html>
```
FILE: styles.css
```css
* { box-sizing: border-box; }

body {
  margin: 0;
  background: #000;
  color: #fff;
  font: 14px/20px "Noto Sans", "Open Sans", sans-serif;
  overflow: hidden;
}

button {
  display: flex;
  align-items: center;
  justify-content: center;
  margin: 0;
  padding: 0;
  border: 0;
  background: none;
  color: inherit;
  font: inherit;
  white-space: nowrap;
}

h1, h2, p, ul, pre { margin: 0; padding: 0; font: inherit; }
svg { display: block; flex: none; }
.defs { position: absolute; width: 0; height: 0; }

.app { display: flex; flex-direction: column; height: 100vh; }

.caret::before {
  content: "";
  border: 5px solid transparent;
  border-top-color: #888;
  border-bottom: 0;
}
.caret.white::before { border-width: 4px 4px 0; border-top-color: #eee; }

.bar { width: 2px; height: 24px; background: #777a7d; }

/* VMware window frame */
.titlebar {
  display: flex;
  align-items: center;
  flex: none;
  height: 30px;
  padding: 0 2px 0 5px;
  border-top: 1px solid #000;
  border-bottom: 1px solid #606060;
  background: #333;
}
.titlebar-logo { width: 20px; height: 20px; }
.titlebar h1 { margin-left: 22px; color: #919191; }
.win-controls { display: flex; margin-left: auto; }
.win-controls button { width: 59px; height: 28px; }

.vm-toolbar {
  display: flex;
  align-items: center;
  flex: none;
  height: 46px;
  padding: 0 0 2px 13px;
  border: 1px solid #606060;
  border-width: 0 1px 2px;
  background: #333;
}
.vm-menu { display: flex; gap: 19px; width: 267px; }
.tool-group {
  display: flex;
  align-items: center;
  height: 28px;
  padding: 0 6px;
  border-left: 1px solid #5c5c5c;
}
.tool-group button { width: 36px; height: 34px; }
.tool-group .caret { width: 14px; }
.power { width: 68px; }
.single { width: 50px; }
.console { width: 50px; padding: 0 10px; }
.console .active {
  width: 30px;
  border: 1px solid #1f6fb0;
  border-radius: 3px;
  background: #1e1e1e;
}
.stretch { padding-left: 8px; }

.vm-tabs { display: flex; gap: 5px; flex: none; height: 40px; padding: 6px 5px 0; }
.vm-tab {
  display: flex;
  align-items: center;
  justify-content: space-between;
  width: 100px;
  padding: 0 8px 2px 6px;
  border: 1px solid #3c3c3c;
  border-bottom: 0;
  border-radius: 4px 4px 0 0;
  color: #8a8a8a;
  font-size: 13px;
}
.vm-tab button { gap: 5px; }
.vm-tab.current { width: 141px; background: #1e1e1e; color: #fff; font-weight: 700; }
.vm-tab button:last-child { color: #888; }
.vm-tab.wide { width: 183px; }

/* Guest display */
.guest {
  display: flex;
  flex-direction: column;
  flex: 1;
  min-height: 0;
  border: 1px solid #606060;
  border-top: 0;
  background: #1a1c22;
}

.panel { display: flex; flex: none; height: 34px; padding-right: 9px; background: #23252f; }
.launchers, .tasks, .tray { display: flex; align-items: center; }
.launchers { padding-left: 4px; }
.launchers button { width: 34px; }
.launchers .kali {
  width: 26px;
  height: 26px;
  margin-right: 7px;
  background: #2777ff;
  box-shadow: 0 0 4px #2777ff;
}
.launchers .bar + button { margin-left: 3px; }
.launchers .term { width: 28px; }
.launchers .chev { width: 16px; margin-right: 5px; }
.workspaces { display: flex; margin-left: 3px; color: #c9cbd0; }
.workspaces button { width: 32px; border-bottom: 2px solid transparent; }
.workspaces .on, .tasks .on { border-bottom: 2px solid #2777ff; background: #1b1d25; }
.tasks { padding-left: 4px; }
.tasks button { width: 34px; height: 34px; }
.tasks .bar + button { margin-left: 3px; }
.cpu { align-self: flex-end; margin-left: auto; }
.tray { gap: 20px; margin-left: 12px; }
.tray .clock { margin: 0 -7px; color: #d6d9de; }
.tray .bar { margin-right: -8px; }

/* Wireshark window */
.shark {
  display: flex;
  flex-direction: column;
  flex: 1;
  min-height: 0;
  margin: 2px 1px 1px;
  padding: 0 4px 0 5px;
  border-radius: 6px;
  background: #23252e;
}
.shark-title { display: flex; align-items: center; gap: 6px; height: 30px; padding: 0 2px 0 5px; }
.shark-title h2 { flex: 1; text-align: center; font-size: 12px; font-weight: 500; }
.shark-title button {
  width: 18px;
  height: 18px;
  border: 1px solid #0c0d11;
  border-radius: 50%;
  background: #343844;
}
.shark-title .close { border-color: #2777ff; background: #2777ff; }

.shark-menu { display: flex; gap: 17px; height: 23px; padding: 0 9px; border-bottom: 1px solid #77797e; }
.shark-menu u { text-underline-offset: 3px; text-decoration-thickness: 1px; }
.shark-menu button { display: block; line-height: 20px; }

.shark-tools { display: flex; align-items: center; height: 39px; padding-left: 2px; border-bottom: 1px solid #77797e; }
.shark-tools button { width: 33px; height: 30px; }
.shark-tools i { width: 7px; height: 20px; border-left: 1px solid #1c1e25; }
.shark-tools .checked { width: 31px; margin: 0 1px; border: 1px solid #45484f; border-radius: 3px; background: #1f2128; }
.dim { filter: grayscale(1) brightness(.75); }
.one { width: 12px; border-radius: 1px; background: #eee; color: #222; font-size: 10px; font-weight: 700; line-height: 12px; }
.layout {
  display: grid;
  grid-template-columns: 1fr 1fr;
  gap: 1px;
  width: 24px;
  border: 1px solid #888;
  background: #999;
  color: #555;
  font-size: 8px;
  line-height: 10px;
}
.layout b { background: #eee; font-weight: 400; }
.layout b:first-child { grid-column: 1 / 3; }

.filter { display: flex; align-items: center; gap: 5px; height: 31px; padding: 4px 18px 5px 3px; }
.filter-box {
  display: flex;
  align-items: center;
  flex: 1;
  height: 22px;
  border: 1px solid #eee;
  border-radius: 3px;
}
.filter-box input {
  flex: 1;
  height: 20px;
  padding: 0 3px;
  border: solid #eee;
  border-width: 0 1px;
  outline: 0;
  background: #060;
  color: #fff;
  font: inherit;
}
.bookmark { width: 17px; }
.clear { width: 14px; height: 14px; margin-left: 2px; border-radius: 1px; background: #8d8f88; }
.apply { width: 24px; height: 14px; margin: 0 3px; border-radius: 2px; background: #9a9cab; }
.filter-box .caret { width: 15px; }
.add { width: 14px; }

.packets {
  display: flex;
  flex: 341 1 0;
  min-height: 0;
  padding-right: 38px;
  border: 1px solid #1a1c22;
  border-width: 0 1px 1px 0;
  overflow: hidden;
}
.packet-scroll { flex: 1; min-width: 0; overflow: hidden; }
.minimap { width: 8px; height: 100%; border-left: 1px solid #333; }
table { width: 100%; table-layout: fixed; border-collapse: collapse; }
.c-no { width: 80px; }
.c-time { width: 126px; }
.c-addr { width: 189px; }
.c-proto { width: 72px; }
.c-len { width: 54px; }
th {
  height: 22px;
  padding: 1px 2px 0;
  border-right: 1px solid #3b3f47;
  background: #272c34;
  font: 400 14px/20px "Noto Sans", sans-serif;
  text-align: left;
}
th + th { padding-left: 3px; }
th:last-child { border-right: 0; }
td {
  height: 17px;
  padding: 0 4px;
  font: 15px/17px "Liberation Mono", monospace;
  white-space: pre;
}
td:first-child, td:nth-child(6) { padding: 0 2px; text-align: right; }
tbody tr { background: #a0a0a0; color: #12272e; }
tbody .rst { background: #a40000; color: #fffc9c; }
tbody .selected { background: #2777ff; color: #fff; }
.first { background: linear-gradient(#a0a0a0, #a0a0a0) 9px 8px / 8px 1px no-repeat, linear-gradient(#a0a0a0, #a0a0a0) 9px 8px / 1px 9px no-repeat; }
.related { background: repeating-linear-gradient(#12272e 0 4px, transparent 4px 6px) 9px 0 / 1px 100% no-repeat; }
.rst .related { background-image: repeating-linear-gradient(#a0a070 0 4px, transparent 4px 6px); }

.splitter { flex: none; height: 4px; background: radial-gradient(#777, #777) 50% 50% / 16px 1px no-repeat; }

.lower { display: flex; flex: 344 1 0; min-height: 0; }
.details {
  display: flex;
  flex: 949 1 0;
  min-width: 0;
  border: 1px solid #1a1c22;
  background: #272935;
  overflow: hidden;
}
.tree { flex: 1; min-width: 0; list-style: none; font: 15px/17px "Liberation Mono", monospace; }
.tree li { position: relative; padding-left: 40px; }
.tree span { display: block; padding-left: 3px; white-space: pre; }
.tree .top { padding-left: 20px; background: #23252e; }
.tree .top.open { background: none; }
.tree .closed::before, .tree .open::before {
  content: "";
  position: absolute;
  top: 5px;
  left: 28px;
  border: 4px solid transparent;
  border-left-color: #aaa;
  border-right: 0;
}
.tree .top.closed::before { left: 8px; }
.tree .top.open::before { top: 7px; left: 6px; border: 4px solid transparent; border-top-color: #aaa; border-bottom: 0; }
.tree .related-proto { background: #a0ffff; color: #10202a; }
.tree .flags { background: #80b5f8; color: #10202a; }
.scrollbar { width: 5px; height: 284px; margin: 0 1px; border-radius: 3px; background: #55575c; }
.grip { width: 7px; background: radial-gradient(#777, #777) 50% 50% / 1px 16px no-repeat; }
.bytes {
  display: flex;
  flex: 951 1 0;
  min-width: 0;
  border: 1px solid #2b3a56;
  background: linear-gradient(#393c48, #3a4150 25%, #2c3950);
  overflow: hidden;
}
.bytes pre { font: 15px/17px "Liberation Mono", monospace; }
.offsets { width: 54px; padding-left: 8px; background: rgba(30, 34, 46, .25); color: #6c717c; }
.offsets em { color: #949aa6; font-style: normal; }
.hex { padding-left: 8px; }
.hex mark { background: #3d84ff; color: #fff; }
.hex s { color: #757b88; text-decoration: none; }

.shark-status { display: flex; align-items: center; height: 28px; padding: 0 6px 0 9px; gap: 11px; white-space: nowrap; }
.shark-status .hint { flex: 1; min-width: 0; margin-left: 4px; overflow: hidden; }
.shark-status .count { width: 534px; padding-left: 13px; border-left: 1px dashed #777; font-weight: 500; line-height: 16px; }
.shark-status .profile { padding-left: 13px; border-left: 1px dashed #777; font-weight: 500; line-height: 16px; }

/* VMware status bar */
.vm-status {
  display: flex;
  align-items: center;
  justify-content: space-between;
  flex: none;
  height: 26px;
  padding: 0 24px 0 1px;
  border-bottom: 1px solid #4a4a4a;
  background: #292929;
}
.devices { display: flex; align-items: center; gap: 5px; }
.devices b { width: 2px; height: 20px; margin: 0 3px; background: #eee; }

/* Windows taskbar */
.taskbar {
  position: relative;
  display: grid;
  grid-template-columns: 1fr auto 1fr;
  align-items: center;
  flex: none;
  height: 59px;
  background: linear-gradient(90deg, #1c222d 15%, #15204a 22%, #142059 30%, #142059 50%, #1e1f3a 56%, #1d1f38 60%, #14204f 68%, #1b1f36 76%, #1b222d 85%, #1b212b);
}
.weather { position: relative; justify-self: start; margin-left: 25px; padding-bottom: 2px; gap: 5px; text-align: left; }
.weather small { display: block; color: #b8bbc0; font-size: 14px; }
.badge { position: absolute; top: 0; left: 14px; width: 20px; color: #111; font-size: 13px; text-align: center; }
.apps { display: flex; align-items: center; gap: 25px; }
.apps button { position: relative; width: 30px; height: 59px; }
.apps .search {
  width: 126px;
  height: 40px;
  margin: 0 -8px;
  gap: 7px;
  border: 1px solid #2c3765;
  border-radius: 20px;
  background: #222c5a;
}
.running::after {
  content: "";
  position: absolute;
  bottom: 5px;
  width: 8px;
  height: 4px;
  border-radius: 2px;
  background: #9ba0b2;
}
.systray { display: flex; align-items: center; justify-self: end; gap: 23px; padding: 0 24px 2px 0; }
.indicators { gap: 10px; }
.date { display: grid; justify-items: end; }

.activate {
  position: absolute;
  right: 82px;
  bottom: 107px;
  color: #7e838c;
  pointer-events: none;
}
.activate p { font-size: 24px; line-height: 36px; }
.activate .sub { font-size: 17px; line-height: 24px; }
```
